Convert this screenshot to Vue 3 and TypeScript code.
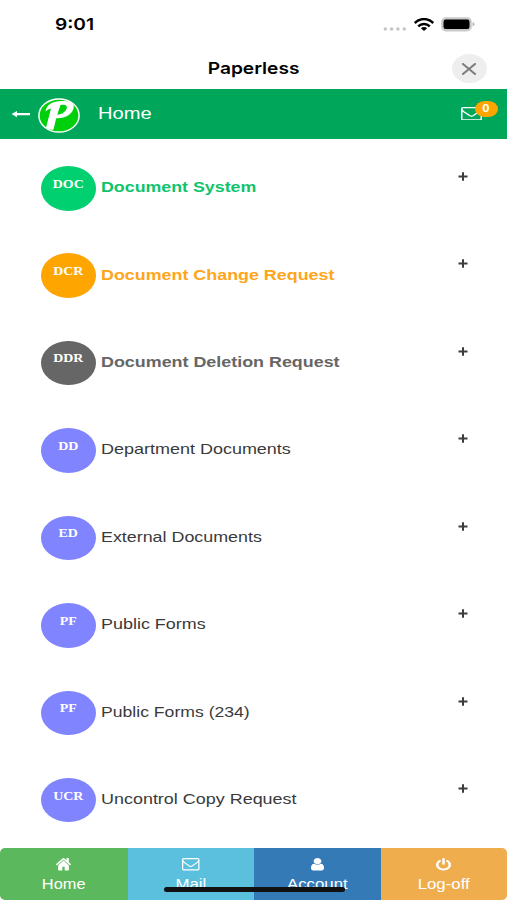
<script setup lang="ts">
interface Entry {
  code: string
  title: string
  tone: string
  stretch: number
  bold?: boolean
}

interface Tab {
  label: string
  tone: string
  box: string
  path: string
}

const envelope =
  'M1664 1504v-768q-32 36-69 66-268 206-426 338-51 43-83 67t-86.5 48.5-102.5 24.5h-2q-48 0-102.5-24.5t-86.5-48.5-83-67q-158-132-426-338-37-30-69-66v768q0 13 9.5 22.5t22.5 9.5h1472q13 0 22.5-9.5t9.5-22.5zm0-1051v-24.5l-.5-13-3-12.5-5.5-9-9-7.5-14-2.5h-1472q-13 0-22.5 9.5t-9.5 22.5q0 168 147 284 193 152 401 317 6 5 35 29.5t46 37.5 44.5 31.5 50.5 27.5 43 9h2q20 0 43-9t50.5-27.5 44.5-31.5 46-37.5 35-29.5q208-165 401-317 54-43 100.5-115.5t46.5-131.5zm128-37v1088q0 66-47 113t-113 47h-1472q-66 0-113-47t-47-113v-1088q0-66 47-113t113-47h1472q66 0 113 47t47 113z'

const entries: Entry[] = [
  { code: 'DOC', title: 'Document System', tone: 'green', stretch: 1.203, bold: true },
  { code: 'DCR', title: 'Document Change Request', tone: 'orange', stretch: 1.208, bold: true },
  { code: 'DDR', title: 'Document Deletion Request', tone: 'grey', stretch: 1.209, bold: true },
  { code: 'DD', title: 'Department Documents', tone: 'violet', stretch: 1.215 },
  { code: 'ED', title: 'External Documents', tone: 'violet', stretch: 1.207 },
  { code: 'PF', title: 'Public Forms', tone: 'violet', stretch: 1.213 },
  { code: 'PF', title: 'Public Forms (234)', tone: 'violet', stretch: 1.19 },
  { code: 'UCR', title: 'Uncontrol Copy Request', tone: 'violet', stretch: 1.213 },
]

const tabs: Tab[] = [
  {
    label: 'Home',
    tone: 'home',
    box: '89 253 1614 1283',
    path: 'M1472 992v480q0 26-19 45t-45 19h-384v-384h-256v384h-384q-26 0-45-19t-19-45v-480q0-1 .5-3t.5-3l575-474 575 474q1 2 1 6zm223-69l-62 74q-8 9-21 11h-3q-13 0-21-7l-692-577-692 577q-12 8-24 7-13-2-21-11l-62-74q-8-10-7-23.5t11-21.5l719-599q32-26 76-26t76 26l244 204v-195q0-14 9-23t23-9h192q14 0 23 9t9 23v408l219 182q10 8 11 21.5t-7 23.5z',
  },
  { label: 'Mail', tone: 'mail', box: '0 256 1792 1408', path: envelope },
  {
    label: 'Account',
    tone: 'account',
    box: '256 128 1280 1536',
    path: 'M1536 1399q0 109-62.5 187t-150.5 78h-854q-88 0-150.5-78t-62.5-187q0-85 8.5-160.5t31.5-152 58.5-131 94-89 134.5-34.5q131 128 313 128t313-128q76 0 134.5 34.5t94 89 58.5 131 31.5 152 8.5 160.5zm-256-887q0 159-112.5 271.5t-271.5 112.5-271.5-112.5-112.5-271.5 112.5-271.5 271.5-112.5 271.5 112.5 112.5 271.5z',
  },
  {
    label: 'Log-off',
    tone: 'logoff',
    box: '128 0 1536 1664',
    path: 'M1664 896q0 156-61 298t-164 245-245 164-298 61-298-61-245-164-164-245-61-298q0-182 80.5-343t226.5-270q43-32 95.5-25t83.5 50q32 42 24.5 94.5t-49.5 84.5q-98 74-151.5 181t-53.5 228q0 104 40.5 198.5t109.5 163.5 163.5 109.5 198.5 40.5 198.5-40.5 163.5-109.5 109.5-163.5 40.5-198.5q0-121-53.5-228t-151.5-181q-42-32-49.5-84.5t24.5-94.5q31-43 84-50t95 25q146 109 226.5 270t80.5 343zm-640-768v640q0 52-38 90t-90 38-90-38-38-90v-640q0-52 38-90t90-38 90 38 38 90z',
  },
]
</script>

<template>
  <div class="screen">
    <div class="status">
      <span class="clock">9:01</span>
      <div class="signals">
        <svg class="dots" viewBox="0 0 24 4">
          <circle v-for="n in 4" :key="n" :cx="n * 6.3 - 4" cy="2" r="1.7" fill="#c4c4c6" />
        </svg>
        <svg class="wifi" viewBox="0 0 20 13" preserveAspectRatio="none">
          <g fill="none" stroke="#000" stroke-width="2.5">
            <path d="M.8 5C6-.2 14-.2 19.200 5" />
            <path d="M4.200 8.300C7.400 5.200 12.600 5.200 15.800 8.300" />
          </g>
          <path d="M6.900 10.200C8.600 8.600 11.400 8.600 13.100 10.200L10 13z" />
        </svg>
        <svg class="battery" viewBox="0 0 34 15">
          <rect x=".2" y=".2" width="30.600" height="14.200" rx="4.600" fill="#c9c9cb" />
          <rect x="2.500" y="2.600" width="26" height="9.400" rx="2.200" />
          <path d="M31.500 5q2 .6 2 2.200t-2 2.200z" fill="#b9b9bb" />
        </svg>
      </div>
    </div>

    <div class="titlebar">
      <span class="title">Paperless</span>
      <button class="close" aria-label="Close">
        <svg viewBox="0 0 14 12"><path d="M1 1l12 10M13 1L1 11" stroke="#7d7d80" stroke-width="2.100" stroke-linecap="round" /></svg>
      </button>
    </div>

    <header class="navbar">
      <svg class="back" viewBox="0 0 20 8"><path d="M.5 4L6 1v2h13v2.200H6V7.200z" fill="#fff" /></svg>
      <svg class="logo" viewBox="0 0 42 35">
        <ellipse cx="21" cy="17.500" rx="20.100" ry="16.600" fill="#00cf0c" stroke="#fff" stroke-width="1.500" />
        <path d="M12 6C18 1.500 36.500 2 35.800 8.800C35 16.500 27 20.800 18.200 20.300L15.500 31.500Q12 32.500 8 29.800L13 10.500Q10 11 7.500 13.500Q8 9 12 6z" fill="#fff" />
        <path d="M22.500 7C29 5.500 30 9 27.800 12.300Q25 16.300 19.200 16.800z" fill="#00cf0c" />
      </svg>
      <span class="heading">Home</span>
      <div class="inbox">
        <svg class="inbox-icon" viewBox="0 256 1792 1408" preserveAspectRatio="none"><path :d="envelope" fill="#fff" /></svg>
        <span class="count"><span>0</span></span>
      </div>
    </header>

    <main class="list">
      <div v-for="(entry, i) in entries" :key="i" class="row" :class="entry.tone">
        <span class="badge"><span class="code">{{ entry.code }}</span></span>
        <span class="name" :class="{ bold: entry.bold }" :style="{ transform: `scaleX(${entry.stretch})` }">{{ entry.title }}</span>
        <svg class="plus" viewBox="0 0 10 9"><path d="M.5 4.500h9M5 .3v8.400" stroke="#3c3c3c" stroke-width="2" /></svg>
      </div>
    </main>

    <nav class="tabs">
      <div v-for="tab in tabs" :key="tab.label" class="tab" :class="tab.tone">
        <svg class="icon" :viewBox="tab.box" preserveAspectRatio="none"><path :d="tab.path" fill="#fff" /></svg>
        <span class="label">{{ tab.label }}</span>
      </div>
      <div class="indicator"></div>
    </nav>
  </div>
</template>

<style>
body {
  margin: 0;
  background: #fff;
}
</style>

<style scoped>
.screen {
  display: flex;
  flex-direction: column;
  width: 507px;
  height: 900px;
  overflow: hidden;
  background: #fff;
  font-family: 'Liberation Sans', Arial, sans-serif;
}
svg {
  display: block;
  flex: none;
}
.status {
  display: flex;
  justify-content: space-between;
  height: 48px;
  padding: 0 32px 0 55px;
  box-sizing: border-box;
}
.clock {
  font: 600 16.500px/48px Inter, sans-serif;
  transform: scaleX(1.16);
  transform-origin: left;
}
.signals {
  display: flex;
  align-items: flex-start;
}
.dots {
  width: 24px;
  height: 4px;
  margin: 27px 7px 0 0;
}
.wifi {
  width: 20px;
  height: 13px;
  margin: 17.500px 7px 0 0;
}
.battery {
  width: 34px;
  height: 15px;
  margin-top: 17px;
}
.titlebar {
  display: grid;
  grid-template-columns: 1fr auto 1fr;
  align-items: center;
  height: 41px;
}
.title {
  grid-column: 2;
  padding-left: 1px;
  font: 600 16.500px/38px Inter, sans-serif;
  transform: translateY(-1px) scaleX(1.16);
}
.close {
  display: grid;
  place-items: center;
  justify-self: end;
  width: 35px;
  height: 29px;
  margin-right: 20.500px;
  padding: 0;
  border: 0;
  border-radius: 50%;
  background: #eeeeef;
}
.close svg {
  width: 14px;
  height: 12px;
  margin-right: 1px;
}
.navbar {
  display: flex;
  align-items: center;
  height: 49.500px;
  padding: 0 9.500px 0 11px;
  background: #00a65a;
  color: #fff;
}
.back {
  width: 20px;
  height: 8px;
  margin: 1px 6.500px 0 0;
}
.logo {
  width: 42px;
  height: 35px;
  margin-top: 4px;
}
.heading {
  margin: 0 auto 0 18px;
  font-size: 16.800px;
  line-height: 24px;
  transform: scaleX(1.2);
  transform-origin: left;
}
.inbox {
  display: flex;
  align-items: flex-start;
  height: 25px;
}
.inbox-icon {
  width: 21px;
  height: 13.500px;
  margin-top: 5.500px;
}
.count {
  position: relative;
  width: 23px;
  height: 16px;
  margin-left: -7.500px;
  border-radius: 50% / 50%;
  border-radius: 10px / 8px;
  background: #ffa500;
  font-size: 10px;
  font-weight: 700;
  line-height: 16px;
  text-align: center;
}
.count span {
  display: inline-block;
  transform: scaleX(1.3);
}
.list {
  flex: none;
  padding: 27.500px 39.500px 0 41px;
}
.row {
  display: flex;
  align-items: flex-start;
  height: 87.430px;
}
.badge {
  flex: none;
  width: 54.500px;
  height: 44.500px;
  border-radius: 50%;
  background: var(--tone);
  color: #fff;
  text-align: center;
}
.code {
  display: block;
  padding-top: 10.600px;
  font: 700 11.600px/16px 'Liberation Serif', serif;
  transform: scaleX(1.2);
}
.name {
  margin: 11.200px auto 0 5.500px;
  color: #3a3a3a;
  font-size: 14.800px;
  line-height: 21px;
  white-space: nowrap;
  transform-origin: left;
}
.name.bold {
  color: var(--text);
  font-weight: 700;
}
.plus {
  width: 10px;
  height: 9px;
  margin-top: 6px;
}
.green {
  --tone: #00d070;
  --text: #10c46c;
}
.orange {
  --tone: #ffa500;
  --text: #ffa519;
}
.grey {
  --tone: #666;
  --text: #666;
}
.violet {
  --tone: #8085ff;
}
.tabs {
  position: absolute;
  top: 847.500px;
  left: 0;
  display: grid;
  grid-template-columns: 127.500px 126.500px 126.500px 126.500px;
  width: 507px;
  height: 52.500px;
  overflow: hidden;
  border-radius: 5px;
}
.tab {
  display: flex;
  flex-direction: column;
  align-items: center;
  padding-top: 10.500px;
  color: #fff;
}
.icon {
  width: 15px;
  height: 12.500px;
}
.mail .icon {
  width: 17.500px;
}
.account .icon {
  width: 13px;
}
.label {
  margin-top: 4px;
  font-size: 14px;
  line-height: 18px;
  transform: scaleX(1.2);
}
.home .label {
  transform: scaleX(1.17);
}
.home {
  background: #5cb85c;
}
.mail {
  background: #5bc0de;
}
.account {
  background: #337ab7;
}
.logoff {
  background: #f0ad4e;
}
.indicator {
  position: absolute;
  top: 39.500px;
  left: 163.500px;
  width: 181px;
  height: 5px;
  border-radius: 3px;
  background: #111;
}
</style>
